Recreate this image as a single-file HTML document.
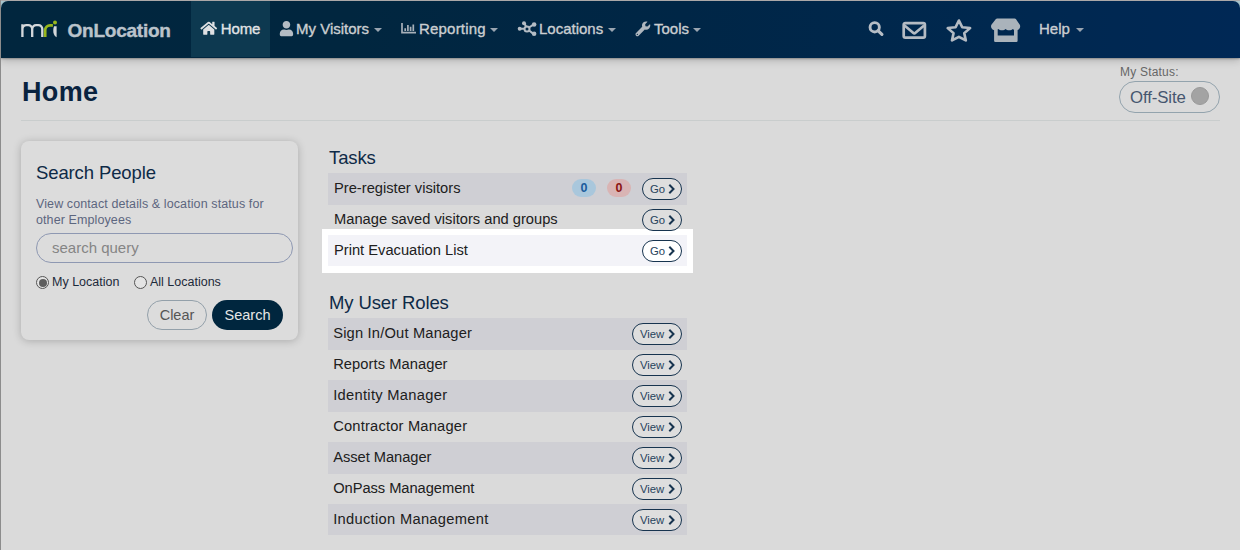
<!DOCTYPE html>
<html>
<head>
<meta charset="utf-8">
<title>OnLocation - Home</title>
<style>
*{box-sizing:border-box;margin:0;padding:0}
html,body{width:1240px;height:550px;overflow:hidden}
body{font-family:"Liberation Sans",sans-serif;background:#dadada;position:relative;color:#222}
.abs{position:absolute}
#frameT{left:0;top:0;width:1240px;height:1px;background:#aba8a8}
#frameL{left:0;top:0;width:1px;height:550px;background:#8c8c8c}
#cornerbg{left:1px;top:1px;width:1239px;height:12px;background:#aecdd6}
#nav{left:1px;top:1px;width:1239px;height:57px;border-radius:7px 7px 0 0;
 background:linear-gradient(90deg,#01263e 0%,#01263f 28%,#002646 55%,#00284f 80%,#002855 100%);
 box-shadow:0 2px 9px rgba(0,0,0,.22),0 1px 2px rgba(0,0,0,.25)}
#homeTab{left:191px;top:1px;width:79px;height:56px;background:#0d3950}
.nt{position:absolute;top:19px;height:20px;line-height:20px;font-size:15px;color:#cbced1;white-space:nowrap;-webkit-text-stroke:.35px #cbced1}
.caret{position:absolute;top:28px;width:0;height:0;border-left:4px solid transparent;border-right:4px solid transparent;border-top:4px solid #9aa5b1}
#brand{left:67.600px;top:18.500px;font-size:19px;font-weight:bold;color:#bac3cb;-webkit-text-stroke:.4px #bac3cb;line-height:24px;letter-spacing:-.25px;white-space:nowrap}
#title{left:22px;top:75px;font-size:27px;font-weight:bold;color:#09233f;line-height:34px;letter-spacing:.35px}
#hr{left:21px;top:120px;width:1199px;height:1px;background:#c9cdcd}
#mslabel{left:1120px;top:65px;font-size:12px;color:#666;line-height:15px;white-space:nowrap;letter-spacing:.2px}
#pill{left:1119px;top:81px;width:101px;height:32px;border:1px solid #93a3ad;border-radius:16px}
#pilltxt{left:1130px;top:87px;font-size:16.800px;letter-spacing:-.1px;line-height:22px;color:#46566f;white-space:nowrap}
#dot{left:1191px;top:87px;width:18px;height:18px;border-radius:50%;background:#a3a3a3;border:1px solid #999}
#panel{left:21px;top:141px;width:277px;height:199px;border-radius:8px;background:#dcdcdc;box-shadow:0 1px 8px rgba(0,0,0,.22)}
.h2{position:absolute;font-size:18.500px;letter-spacing:-.12px;line-height:24px;color:#0e2a47;white-space:nowrap}
.desc{position:absolute;font-size:12.500px;line-height:16px;color:#5c667f;white-space:nowrap;letter-spacing:.1px}
#inp{left:36px;top:233px;width:257px;height:30px;border:1px solid #8e98b2;border-radius:15px}
#ph{left:52px;top:238px;font-size:15px;line-height:20px;color:#858585;white-space:nowrap}
.radio{position:absolute;width:13px;height:13px;border-radius:50%;border:1px solid #555;background:#e4e4e4}
.radio.on:after{content:"";position:absolute;left:1.500px;top:1.500px;width:8px;height:8px;border-radius:50%;background:#5e5e5e}
.rl{position:absolute;font-size:12.5px;line-height:16px;color:#1c2a3a;white-space:nowrap}
#clear{left:147px;top:300px;width:60px;height:30px;border:1px solid #93a0aa;border-radius:15px;font-size:14.500px;line-height:28px;text-align:center;color:#555}
#search{left:212px;top:300px;width:71px;height:30px;border-radius:15px;background:#00263e;font-size:14.500px;line-height:30px;text-align:center;color:#e6e6e6}
.row{position:absolute;left:328px;width:359px;height:31px}
.row.s{background:#cfcfd4;height:31.700px}
.row span{position:absolute;left:6px;top:5px;font-size:14.700px;line-height:20px;color:#202020;white-space:nowrap}
.btn{position:absolute;top:5px;height:22px;border:1px solid #17344f;border-radius:11px;font-size:11.300px;line-height:20px;color:#27435c;background:#dedede}
.btn.go{left:314px;width:40px;padding-left:7px}
.btn.view{left:304px;width:50px;padding-left:7px}
.btn svg{position:absolute;top:5px;right:6.500px;width:7px;height:10px}
.badge{position:absolute;top:6px;width:24px;height:18px;border-radius:9px;font-size:12.500px;font-weight:bold;line-height:18px;text-align:center}
#hl{left:322px;top:229px;width:371px;height:44px;background:#fff}
#hlrow{background:#f3f3f8}
#hlrow .btn{background:#fff}
</style>
</head>
<body>
<div class="abs" id="cornerbg"></div>
<div class="abs" id="nav"></div>
<div class="abs" id="homeTab"></div>
<div class="abs" id="frameT"></div>
<div class="abs" id="frameL"></div>

<!-- logo -->
<svg class="abs" style="left:15px;top:12px" width="60" height="33" viewBox="0 0 60 33">
 <path d="M7.400 25V12.200M7.400 17a3.900 3.900 0 0 1 3.900-3.900h2a3.900 3.900 0 0 1 3.900 3.900V25M17.200 17a3.900 3.900 0 0 1 3.900-3.900h2.300a3.900 3.900 0 0 1 3.900 3.900V25" fill="none" stroke="#d4d7da" stroke-width="2.350"/>
 <path d="M30.200 25V18.200a4.900 4.900 0 0 1 4.900-4.900h2.800" fill="none" stroke="#98b71c" stroke-width="2.700"/>
 <path d="M41.600 14.300H39C38.300 16 38.100 18.500 38.400 20.600C38.800 22.800 40 24.600 41.600 25.300z" fill="#d4d7da"/>
 <circle cx="40" cy="10.400" r="2" fill="#98b71c"/>
</svg>
<div class="abs" id="brand">OnLocation</div>

<!-- nav items -->
<svg class="abs" style="left:0;top:0" width="720" height="60" viewBox="0 0 720 60">
<g transform="translate(200.400,20.750) scale(0.029)"><path fill="#dfe1e3" d="M280.4 148.3L96 300.1V464a16 16 0 0 0 16 16l112.1-.3a16 16 0 0 0 15.9-16V368a16 16 0 0 1 16-16h64a16 16 0 0 1 16 16v95.600a16 16 0 0 0 16 16.100L464 480a16 16 0 0 0 16-16V300L295.700 148.300a12.200 12.200 0 0 0-15.300 0zM571.600 251.500L488 182.600V44.100a12 12 0 0 0-12-12h-56a12 12 0 0 0-12 12v72.600L318.500 43a48 48 0 0 0-61 0L4.300 251.500a12 12 0 0 0-1.600 16.900l25.500 31a12 12 0 0 0 16.900 1.600l235.200-193.700a12.200 12.200 0 0 1 15.300 0L530.900 301a12 12 0 0 0 16.900-1.600l25.500-31a12 12 0 0 0-1.700-16.900z"/></g>
<g transform="translate(279.800,21) scale(0.0297)"><path fill="#b4bcc4" d="M224 256c70.700 0 128-57.300 128-128S294.700 0 224 0 96 57.300 96 128s57.300 128 128 128zm89.600 32h-16.700c-22.200 10.200-46.900 16-72.900 16s-50.600-5.800-72.900-16h-16.700C60.200 288 0 348.200 0 422.400V464c0 26.500 21.500 48 48 48h352c26.500 0 48-21.500 48-48v-41.600c0-74.200-60.200-134.400-134.400-134.400z"/></g>
<g transform="translate(401,23)"><path d="M1 0v9.700h14" fill="none" stroke="#a7b0b9" stroke-width="1.700"/><path d="M4.200 8V5.200M6.900 8V2M9.600 8V3.800M12.300 8V1.400" stroke="#a7b0b9" stroke-width="1.700" fill="none"/></g>
<g transform="translate(517.700,21.200)"><g stroke="#b4bcc4" stroke-width="2" fill="none"><path d="M2 7.600h5M8.400 5.400L6.600 2.200M11 6.400l4.200-2.600M11 9l4.200 3.200"/></g><circle cx="2" cy="7.600" r="2" fill="#b4bcc4"/><circle cx="6.300" cy="2" r="2" fill="#b4bcc4"/><circle cx="16.400" cy="3.300" r="2.300" fill="#b4bcc4"/><circle cx="16.400" cy="12.600" r="2.300" fill="#b4bcc4"/><circle cx="9.300" cy="7.700" r="2.500" fill="none" stroke="#b4bcc4" stroke-width="2"/></g>
<g transform="translate(635.500,21.400) scale(0.0289)"><path fill="#aeb6be" d="M507.700 109.100c-2.200-9-13.500-12.100-20.100-5.500l-74.400 74.400-67.900-11.300-11.300-67.900 74.400-74.400c6.600-6.600 3.400-17.900-5.700-20.200-47.400-11.700-99.600.9-136.600 37.900-39.600 39.600-50.500 97-34.100 147.200L18.700 402.800c-25 25-25 65.500 0 90.500 25 25 65.500 25 90.500 0l213.200-213.200c50.200 16.700 107.500 5.700 147.400-34.200 37.100-37.100 49.700-89.300 37.900-136.800zM64 472c-13.200 0-24-10.800-24-24 0-13.300 10.700-24 24-24s24 10.700 24 24c0 13.200-10.700 24-24 24z"/></g>
</svg>


<div class="nt" style="left:220.700px;color:#e2e4e6;-webkit-text-stroke-color:#e2e4e6;letter-spacing:-.1px">Home</div>


<div class="nt" style="left:296px">My Visitors</div>
<div class="caret" style="left:374px"></div>


<div class="nt" style="left:419px;letter-spacing:.2px">Reporting</div>
<div class="caret" style="left:490px"></div>


<div class="nt" style="left:539px">Locations</div>
<div class="caret" style="left:608px"></div>


<div class="nt" style="left:654px">Tools</div>
<div class="caret" style="left:693px"></div>

<!-- right icons -->
<svg class="abs" style="left:868px;top:21px" width="17" height="17" viewBox="0 0 17 17"><circle cx="6.700" cy="6.300" r="4.650" fill="none" stroke="#b6bdc5" stroke-width="2.900"/><path d="M10 9.600l3.900 3.700" stroke="#b6bdc5" stroke-width="3.200" stroke-linecap="round" fill="none"/></svg>
<svg class="abs" style="left:902px;top:21px" width="26" height="20" viewBox="0 0 26 20"><g transform="translate(0.300,0.300)"><rect x="1.400" y="1.800" width="21.200" height="14.500" rx="1.600" fill="none" stroke="#b4bbc3" stroke-width="2.700"/><path d="M2.200 4.200l8.600 7.300a1.800 1.800 0 0 0 2.400 0l8.600-7.300" fill="none" stroke="#b4bbc3" stroke-width="2.600"/></g></svg>
<svg class="abs" style="left:945px;top:18px" width="28" height="26" viewBox="0 0 28 26"><path d="M13.90 2.40 L17.13 9.35 L24.74 10.28 L19.13 15.50 L20.60 23.02 L13.90 19.30 L7.20 23.02 L8.67 15.50 L3.06 10.28 L10.67 9.35z" fill="none" stroke="#b4bbc3" stroke-width="2.600" stroke-linejoin="round" transform="translate(13.900,13.500) scale(1.030,.970) translate(-13.900,-13.800)"/></svg>
<svg class="abs" style="left:991px;top:18px" width="30" height="25" viewBox="0 0 30 25"><path fill="#aab3bb" d="M6.200 .4H23.600a1.500 1.500 0 0 1 1.300 .7L28.800 6.800C29.300 7.700 29.200 8.800 29 9.500C28.500 11.100 27.100 12.200 25.400 12.200C23.800 12.200 22.500 11.700 21.800 10.900C21.100 11.700 19.800 12.200 18.200 12.200S15.300 11.700 14.600 10.900C13.900 11.700 12.600 12.200 11 12.200S8.100 11.700 7.400 10.900C6.700 11.700 5.400 12.200 3.800 12.200C2.100 12.200 .7 11.100 .2 9.500C0 8.800-.1 7.700 .4 6.800L4.900 1.100A1.500 1.500 0 0 1 6.200 .4z"/><path fill="#aab3bb" d="M3.100 11.500V22.700a1.200 1.200 0 0 0 1.200 1.200H25.400a1.200 1.200 0 0 0 1.200-1.200V11.500H23V17.600H6.700V11.500z"/></svg>
<div class="nt" style="left:1039px">Help</div>
<div class="caret" style="left:1076px"></div>

<!-- title -->
<div class="abs" id="title">Home</div>
<div class="abs" id="hr"></div>
<div class="abs" id="mslabel">My Status:</div>
<div class="abs" id="pill"></div>
<div class="abs" id="pilltxt">Off-Site</div>
<div class="abs" id="dot"></div>

<!-- search panel -->
<div class="abs" id="panel"></div>
<div class="h2" style="left:36px;top:161px">Search People</div>
<div class="desc" style="left:36px;top:196px">View contact details &amp; location status for</div>
<div class="desc" style="left:36px;top:212px">other Employees</div>
<div class="abs" id="inp"></div>
<div class="abs" id="ph">search query</div>
<div class="radio on" style="left:36px;top:276px"></div>
<div class="rl" style="left:52px;top:274px">My Location</div>
<div class="radio" style="left:134px;top:276px"></div>
<div class="rl" style="left:150px;top:274px">All Locations</div>
<div class="abs" id="clear">Clear</div>
<div class="abs" id="search">Search</div>

<!-- tasks -->
<div class="h2" style="left:329px;top:146px">Tasks</div>
<div class="abs" id="hl"></div>
<div class="row s" style="top:173px"><span>Pre-register visitors</span>
 <div class="badge" style="left:244px;background:#a9c7dc;color:#1c5c9c">0</div>
 <div class="badge" style="left:279px;background:#d9b4b4;color:#8a1212">0</div>
 <div class="btn go">Go<svg viewBox="0 0 7 10"><path d="M1.300 0.800L5.500 5 1.300 9.200" fill="none" stroke="#17344f" stroke-width="2"/></svg></div></div>
<div class="row" style="top:204px"><span>Manage saved visitors and groups</span>
 <div class="btn go">Go<svg viewBox="0 0 7 10"><path d="M1.300 0.800L5.500 5 1.300 9.200" fill="none" stroke="#17344f" stroke-width="2"/></svg></div></div>
<div class="row" id="hlrow" style="top:235px"><span>Print Evacuation List</span>
 <div class="btn go">Go<svg viewBox="0 0 7 10"><path d="M1.300 0.800L5.500 5 1.300 9.200" fill="none" stroke="#17344f" stroke-width="2"/></svg></div></div>

<!-- roles -->
<div class="h2" style="left:329px;top:291px">My User Roles</div>
<div class="row s" style="top:318px"><span style="left:5.200px;letter-spacing:0.18px">Sign In/Out Manager</span><div class="btn view">View<svg viewBox="0 0 7 10"><path d="M1.300 0.800L5.500 5 1.300 9.200" fill="none" stroke="#17344f" stroke-width="2"/></svg></div></div>
<div class="row" style="top:349px"><span style="left:5.200px;letter-spacing:0.06px">Reports Manager</span><div class="btn view">View<svg viewBox="0 0 7 10"><path d="M1.300 0.800L5.500 5 1.300 9.200" fill="none" stroke="#17344f" stroke-width="2"/></svg></div></div>
<div class="row s" style="top:380px"><span style="left:5.200px;letter-spacing:0.30px">Identity Manager</span><div class="btn view">View<svg viewBox="0 0 7 10"><path d="M1.300 0.800L5.500 5 1.300 9.200" fill="none" stroke="#17344f" stroke-width="2"/></svg></div></div>
<div class="row" style="top:411px"><span style="left:5.200px;letter-spacing:0.19px">Contractor Manager</span><div class="btn view">View<svg viewBox="0 0 7 10"><path d="M1.300 0.800L5.500 5 1.300 9.200" fill="none" stroke="#17344f" stroke-width="2"/></svg></div></div>
<div class="row s" style="top:442px"><span style="left:5.200px;letter-spacing:-0.04px">Asset Manager</span><div class="btn view">View<svg viewBox="0 0 7 10"><path d="M1.300 0.800L5.500 5 1.300 9.200" fill="none" stroke="#17344f" stroke-width="2"/></svg></div></div>
<div class="row" style="top:473px"><span style="left:5.200px;letter-spacing:-0.05px">OnPass Management</span><div class="btn view">View<svg viewBox="0 0 7 10"><path d="M1.300 0.800L5.500 5 1.300 9.200" fill="none" stroke="#17344f" stroke-width="2"/></svg></div></div>
<div class="row s" style="top:504px;height:30.600px"><span style="left:5.200px;letter-spacing:0.30px">Induction Management</span><div class="btn view">View<svg viewBox="0 0 7 10"><path d="M1.300 0.800L5.500 5 1.300 9.200" fill="none" stroke="#17344f" stroke-width="2"/></svg></div></div>
</body>
</html>
